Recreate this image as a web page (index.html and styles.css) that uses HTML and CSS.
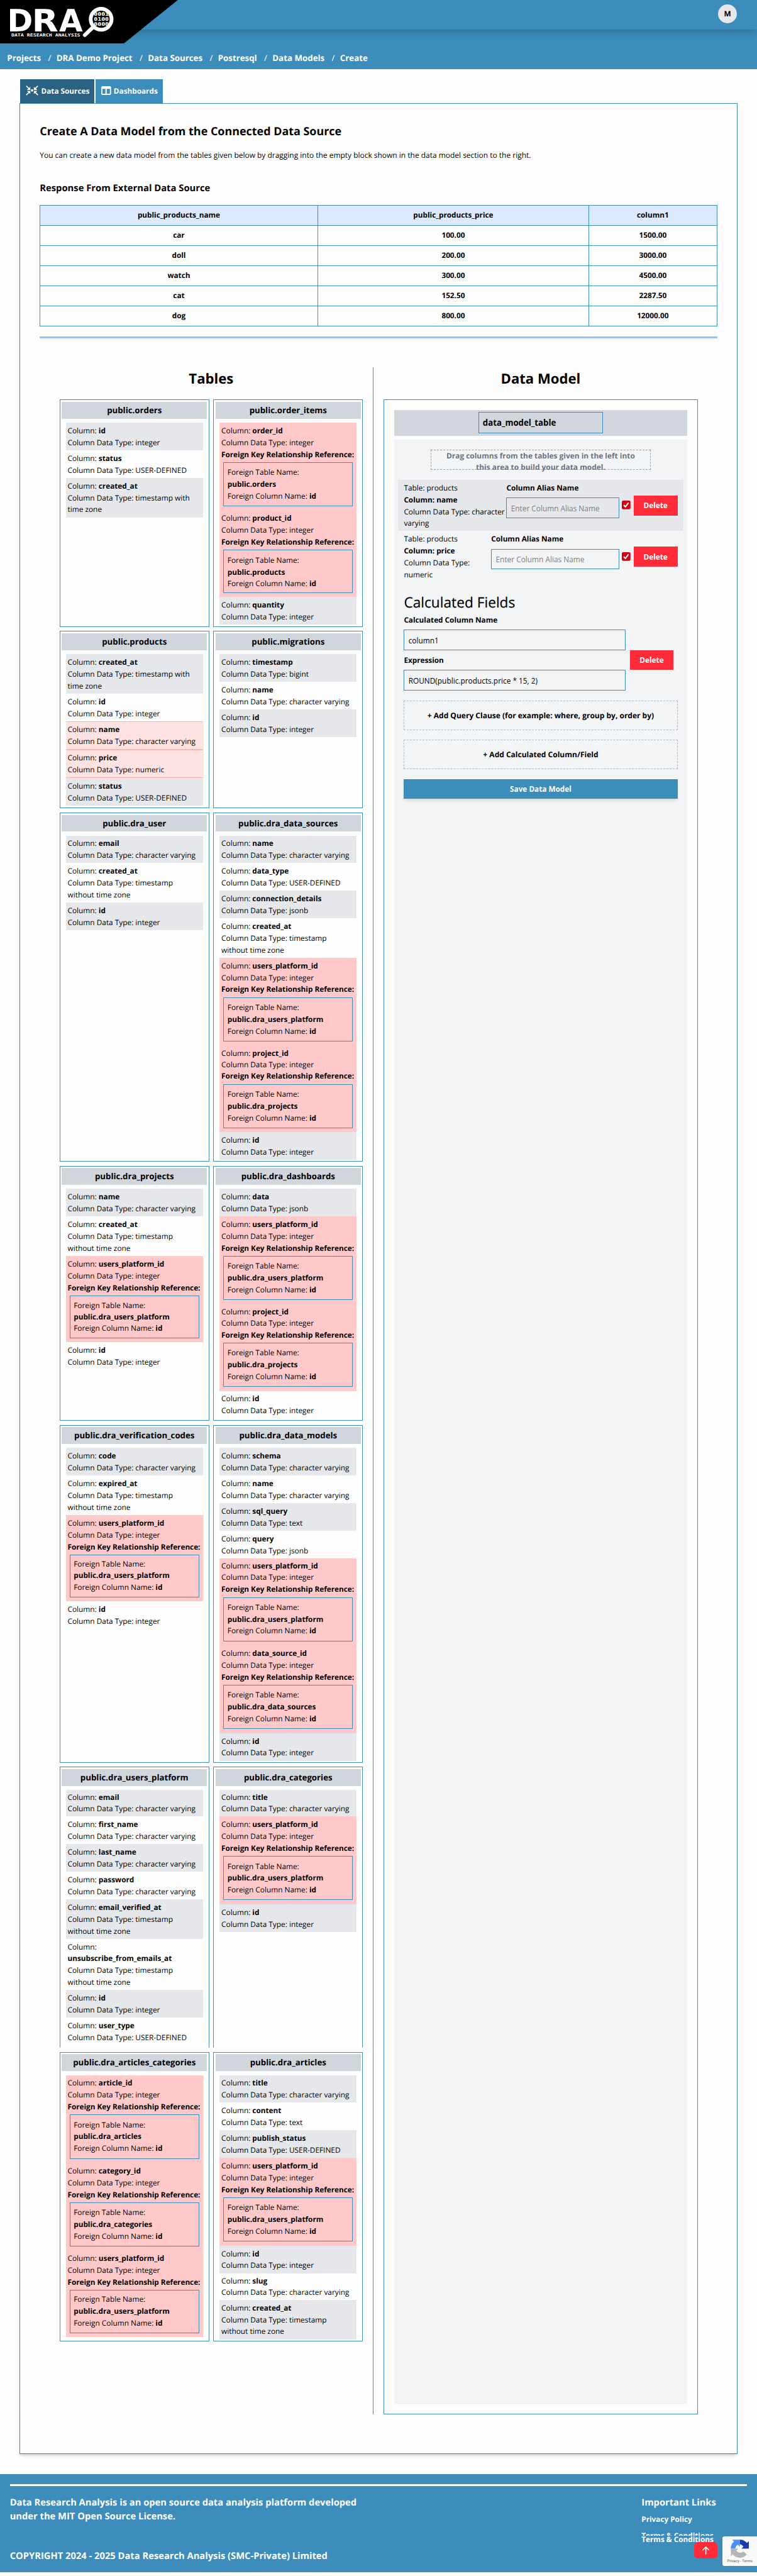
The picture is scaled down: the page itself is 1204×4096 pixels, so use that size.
FILE: index.html
```html
<!DOCTYPE html>
<html lang="en">
<head>
<meta charset="utf-8">
<title>Data Research Analysis - Create Data Model</title>
<link rel="stylesheet" href="styles.css">
</head>
<body>
<header class="site-header">
  <div class="topbar"><span class="avatar">M</span></div>
  <nav class="crumbs">
    <a>Projects</a><i>/</i><a>DRA Demo Project</a><i>/</i><a>Data Sources</a><i>/</i><a>Postresql</a><i>/</i><a>Data Models</a><i>/</i><a>Create</a>
  </nav>
  <svg class="logo" viewBox="0 0 451 110">
    <path d="M0 0H451L314.500 110H0Z" fill="#000"/>
    <g fill="#fff" class="logo-word">
      <text x="18.500" y="80" textLength="65" lengthAdjust="spacingAndGlyphs">D</text>
      <text x="81" y="80" textLength="67" lengthAdjust="spacingAndGlyphs">R</text>
      <text x="150" y="80" textLength="60" lengthAdjust="spacingAndGlyphs">A</text>
    </g>
    <text class="logo-tag" x="28.500" y="92" textLength="175" lengthAdjust="spacingAndGlyphs" fill="#fff">DATA RESEARCH ANALYSIS</text>
    <path d="M238 67L215 89" stroke="#fff" stroke-width="9.500" stroke-linecap="round"/>
    <circle cx="256.500" cy="48.700" r="26.500" fill="#000" stroke="#fff" stroke-width="9.500"/>
    <g class="logo-bits" fill="#fff">
      <text x="238" y="40.300" textLength="38" lengthAdjust="spacingAndGlyphs">0001</text>
      <text x="238" y="52.500" textLength="38" lengthAdjust="spacingAndGlyphs">0100</text>
      <text x="238" y="64.700" textLength="38" lengthAdjust="spacingAndGlyphs">0000</text>
    </g>
  </svg>
</header>

<main>
  <div class="tabs">
    <a class="tab active"><svg class="ico-src" viewBox="196 650 98 77"><g fill="none" stroke="#fff" stroke-width="8" stroke-linecap="round"><path d="M202 655L222 675M288 655L268 675M202 722L222 702M288 722L268 702"/></g><path fill="#fff" d="M231 660V684H205L214 675L222 669ZM259 660V684H285L276 675L268 669ZM231 716V692H205L214 701L222 707ZM259 716V692H285L276 701L268 707Z"/><circle cx="245" cy="688" r="9.500" fill="#fff"/></svg>Data Sources</a>
    <a class="tab"><svg class="ico-dash" viewBox="771 655 75 67"><path fill="#fff" fill-rule="evenodd" d="M781 655H836Q846 655 846 665V712Q846 722 836 722H781Q771 722 771 712V665Q771 655 781 655ZM780 675V712H803V675ZM813 675V712H837V675Z"/></svg>Dashboards</a>
  </div>
  <section class="panel">
    <h1>Create A Data Model from the Connected Data Source</h1>
    <p class="lead">You can create a new data model from the tables given below by dragging into the empty block shown in the data model section to the right.</p>
    <h2>Response From External Data Source</h2>
    <table class="response">
      <colgroup><col class="c1"><col class="c2"><col class="c3"></colgroup>
      <tr class="head"><th>public_products_name</th><th>public_products_price</th><th>column1</th></tr>
      <tr><td>car</td><td>100.00</td><td>1500.00</td></tr>
      <tr><td>doll</td><td>200.00</td><td>3000.00</td></tr>
      <tr><td>watch</td><td>300.00</td><td>4500.00</td></tr>
      <tr><td>cat</td><td>152.50</td><td>2287.50</td></tr>
      <tr><td>dog</td><td>800.00</td><td>12000.00</td></tr>
    </table>
    <div class="rule"></div>

    <div class="workspace">
      <section class="left">
        <h3>Tables</h3>
        <div class="cards">
          <article class="card">
            <h4>public.orders</h4>
            <ul>
              <li class="alt"><p>Column: <b>id</b></p><p>Column Data Type: integer</p></li>
              <li><p>Column: <b>status</b></p><p>Column Data Type: USER-DEFINED</p></li>
              <li class="alt"><p>Column: <b>created_at</b></p><p>Column Data Type: timestamp with time zone</p></li>
            </ul>
          </article>
          <article class="card">
            <h4>public.order_items</h4>
            <ul>
              <li class="fk"><p>Column: <b>order_id</b></p><p>Column Data Type: integer</p><p><b>Foreign Key Relationship Reference:</b></p>
                <div class="ref"><p>Foreign Table Name:</p><p><b>public.orders</b></p><p>Foreign Column Name: <b>id</b></p></div></li>
              <li class="fk"><p>Column: <b>product_id</b></p><p>Column Data Type: integer</p><p><b>Foreign Key Relationship Reference:</b></p>
                <div class="ref tight"><p>Foreign Table Name:</p><p><b>public.products</b></p><p>Foreign Column Name: <b>id</b></p></div></li>
              <li class="alt"><p>Column: <b>quantity</b></p><p>Column Data Type: integer</p></li>
            </ul>
          </article>

          <article class="card">
            <h4>public.products</h4>
            <ul>
              <li class="alt"><p>Column: <b>created_at</b></p><p>Column Data Type: timestamp with time zone</p></li>
              <li><p>Column: <b>id</b></p><p>Column Data Type: integer</p></li>
              <li class="used"><p>Column: <b>name</b></p><p>Column Data Type: character varying</p></li>
              <li class="used"><p>Column: <b>price</b></p><p>Column Data Type: numeric</p></li>
              <li class="alt"><p>Column: <b>status</b></p><p>Column Data Type: USER-DEFINED</p></li>
            </ul>
          </article>
          <article class="card">
            <h4>public.migrations</h4>
            <ul>
              <li class="alt"><p>Column: <b>timestamp</b></p><p>Column Data Type: bigint</p></li>
              <li><p>Column: <b>name</b></p><p>Column Data Type: character varying</p></li>
              <li class="alt"><p>Column: <b>id</b></p><p>Column Data Type: integer</p></li>
            </ul>
          </article>

          <article class="card">
            <h4>public.dra_user</h4>
            <ul>
              <li class="alt"><p>Column: <b>email</b></p><p>Column Data Type: character varying</p></li>
              <li><p>Column: <b>created_at</b></p><p>Column Data Type: timestamp without time zone</p></li>
              <li class="alt"><p>Column: <b>id</b></p><p>Column Data Type: integer</p></li>
            </ul>
          </article>
          <article class="card">
            <h4>public.dra_data_sources</h4>
            <ul>
              <li class="alt"><p>Column: <b>name</b></p><p>Column Data Type: character varying</p></li>
              <li><p>Column: <b>data_type</b></p><p>Column Data Type: USER-DEFINED</p></li>
              <li class="alt"><p>Column: <b>connection_details</b></p><p>Column Data Type: jsonb</p></li>
              <li><p>Column: <b>created_at</b></p><p>Column Data Type: timestamp without time zone</p></li>
              <li class="fk"><p>Column: <b>users_platform_id</b></p><p>Column Data Type: integer</p><p><b>Foreign Key Relationship Reference:</b></p>
                <div class="ref"><p>Foreign Table Name:</p><p><b>public.dra_users_platform</b></p><p>Foreign Column Name: <b>id</b></p></div></li>
              <li class="fk"><p>Column: <b>project_id</b></p><p class="tight">Column Data Type: integer</p><p><b>Foreign Key Relationship Reference:</b></p>
                <div class="ref"><p>Foreign Table Name:</p><p><b>public.dra_projects</b></p><p>Foreign Column Name: <b>id</b></p></div></li>
              <li class="alt"><p>Column: <b>id</b></p><p>Column Data Type: integer</p></li>
            </ul>
          </article>

          <article class="card">
            <h4>public.dra_projects</h4>
            <ul>
              <li class="alt"><p>Column: <b>name</b></p><p>Column Data Type: character varying</p></li>
              <li><p>Column: <b>created_at</b></p><p>Column Data Type: timestamp without time zone</p></li>
              <li class="fk"><p>Column: <b>users_platform_id</b></p><p>Column Data Type: integer</p><p><b>Foreign Key Relationship Reference:</b></p>
                <div class="ref tight"><p>Foreign Table Name:</p><p class="tight"><b>public.dra_users_platform</b></p><p>Foreign Column Name: <b>id</b></p></div></li>
              <li><p>Column: <b>id</b></p><p>Column Data Type: integer</p></li>
            </ul>
          </article>
          <article class="card">
            <h4>public.dra_dashboards</h4>
            <ul>
              <li class="alt"><p>Column: <b>data</b></p><p>Column Data Type: jsonb</p></li>
              <li class="fk"><p>Column: <b>users_platform_id</b></p><p>Column Data Type: integer</p><p><b>Foreign Key Relationship Reference:</b></p>
                <div class="ref"><p>Foreign Table Name:</p><p><b>public.dra_users_platform</b></p><p>Foreign Column Name: <b>id</b></p></div></li>
              <li class="fk"><p class="tight">Column: <b>project_id</b></p><p>Column Data Type: integer</p><p><b>Foreign Key Relationship Reference:</b></p>
                <div class="ref"><p>Foreign Table Name:</p><p><b>public.dra_projects</b></p><p>Foreign Column Name: <b>id</b></p></div></li>
              <li><p>Column: <b>id</b></p><p>Column Data Type: integer</p></li>
            </ul>
          </article>

          <article class="card">
            <h4>public.dra_verification_codes</h4>
            <ul>
              <li class="alt"><p>Column: <b>code</b></p><p>Column Data Type: character varying</p></li>
              <li><p>Column: <b>expired_at</b></p><p>Column Data Type: timestamp without time zone</p></li>
              <li class="fk"><p>Column: <b>users_platform_id</b></p><p>Column Data Type: integer</p><p><b>Foreign Key Relationship Reference:</b></p>
                <div class="ref tight raised"><p>Foreign Table Name:</p><p><b>public.dra_users_platform</b></p><p>Foreign Column Name: <b>id</b></p></div></li>
              <li><p>Column: <b>id</b></p><p>Column Data Type: integer</p></li>
            </ul>
          </article>
          <article class="card">
            <h4>public.dra_data_models</h4>
            <ul>
              <li class="alt"><p>Column: <b>schema</b></p><p>Column Data Type: character varying</p></li>
              <li><p>Column: <b>name</b></p><p>Column Data Type: character varying</p></li>
              <li class="alt"><p>Column: <b>sql_query</b></p><p>Column Data Type: text</p></li>
              <li><p>Column: <b>query</b></p><p>Column Data Type: jsonb</p></li>
              <li class="fk raised"><p>Column: <b>users_platform_id</b></p><p>Column Data Type: integer</p><p><b>Foreign Key Relationship Reference:</b></p>
                <div class="ref"><p>Foreign Table Name:</p><p><b>public.dra_users_platform</b></p><p>Foreign Column Name: <b>id</b></p></div></li>
              <li class="fk"><p>Column: <b>data_source_id</b></p><p>Column Data Type: integer</p><p><b>Foreign Key Relationship Reference:</b></p>
                <div class="ref"><p>Foreign Table Name:</p><p><b>public.dra_data_sources</b></p><p>Foreign Column Name: <b>id</b></p></div></li>
              <li class="alt"><p>Column: <b>id</b></p><p>Column Data Type: integer</p></li>
            </ul>
          </article>

          <article class="card open">
            <h4>public.dra_users_platform</h4>
            <ul>
              <li class="alt"><p class="tight">Column: <b>email</b></p><p>Column Data Type: character varying</p></li>
              <li><p>Column: <b>first_name</b></p><p>Column Data Type: character varying</p></li>
              <li class="alt"><p>Column: <b>last_name</b></p><p>Column Data Type: character varying</p></li>
              <li><p>Column: <b>password</b></p><p>Column Data Type: character varying</p></li>
              <li class="alt"><p>Column: <b>email_verified_at</b></p><p>Column Data Type: timestamp without time zone</p></li>
              <li><p>Column:<br><b>unsubscribe_from_emails_at</b></p><p>Column Data Type: timestamp without time zone</p></li>
              <li class="alt"><p>Column: <b>id</b></p><p>Column Data Type: integer</p></li>
              <li><p>Column: <b>user_type</b></p><p>Column Data Type: USER-DEFINED</p></li>
            </ul>
          </article>
          <article class="card open">
            <h4>public.dra_categories</h4>
            <ul>
              <li class="alt"><p class="tight">Column: <b>title</b></p><p>Column Data Type: character varying</p></li>
              <li class="fk"><p>Column: <b>users_platform_id</b></p><p>Column Data Type: integer</p><p><b>Foreign Key Relationship Reference:</b></p>
                <div class="ref"><p>Foreign Table Name:</p><p><b>public.dra_users_platform</b></p><p>Foreign Column Name: <b>id</b></p></div></li>
              <li class="alt"><p>Column: <b>id</b></p><p>Column Data Type: integer</p></li>
            </ul>
          </article>

          <article class="card">
            <h4>public.dra_articles_categories</h4>
            <ul>
              <li class="fk"><p>Column: <b>article_id</b></p><p>Column Data Type: integer</p><p><b>Foreign Key Relationship Reference:</b></p>
                <div class="ref"><p>Foreign Table Name:</p><p><b>public.dra_articles</b></p><p>Foreign Column Name: <b>id</b></p></div></li>
              <li class="fk"><p>Column: <b>category_id</b></p><p>Column Data Type: integer</p><p><b>Foreign Key Relationship Reference:</b></p>
                <div class="ref"><p>Foreign Table Name:</p><p><b>public.dra_categories</b></p><p>Foreign Column Name: <b>id</b></p></div></li>
              <li class="fk"><p>Column: <b>users_platform_id</b></p><p>Column Data Type: integer</p><p><b>Foreign Key Relationship Reference:</b></p>
                <div class="ref tight raised"><p>Foreign Table Name:</p><p><b>public.dra_users_platform</b></p><p>Foreign Column Name: <b>id</b></p></div></li>
            </ul>
          </article>
          <article class="card">
            <h4>public.dra_articles</h4>
            <ul>
              <li class="alt"><p>Column: <b>title</b></p><p>Column Data Type: character varying</p></li>
              <li><p>Column: <b>content</b></p><p>Column Data Type: text</p></li>
              <li class="alt"><p>Column: <b>publish_status</b></p><p>Column Data Type: USER-DEFINED</p></li>
              <li class="fk"><p>Column: <b>users_platform_id</b></p><p>Column Data Type: integer</p><p><b>Foreign Key Relationship Reference:</b></p>
                <div class="ref"><p>Foreign Table Name:</p><p><b>public.dra_users_platform</b></p><p>Foreign Column Name: <b>id</b></p></div></li>
              <li class="alt"><p>Column: <b>id</b></p><p>Column Data Type: integer</p></li>
              <li><p>Column: <b>slug</b></p><p class="tight">Column Data Type: character varying</p></li>
              <li class="alt"><p>Column: <b>created_at</b></p><p>Column Data Type: timestamp without time zone</p></li>
            </ul>
          </article>
        </div>
      </section>

      <section class="right">
        <h3>Data Model</h3>
        <div class="model">
          <div class="model-head"><input class="model-name" value="data_model_table"></div>
          <div class="model-body">
            <p class="hint">Drag columns from the tables given in the left into<br>this area to build your data model.</p>
            <div class="field shaded">
              <div class="info w1"><p>Table: products</p><p><b>Column: name</b></p><p>Column Data Type: character varying</p></div>
              <label><b>Column Alias Name</b><input placeholder="Enter Column Alias Name"></label>
              <svg class="check" viewBox="0 0 22 22"><rect width="22" height="22" rx="3.500" fill="#d30014"/><path d="M5 11.500L9 16L17 5.500" fill="none" stroke="#fff" stroke-width="3.200"/></svg>
              <button class="delete">Delete</button>
            </div>
            <div class="field">
              <div class="info w2"><p>Table: products</p><p><b>Column: price</b></p><p>Column Data Type: numeric</p></div>
              <label><b>Column Alias Name</b><input placeholder="Enter Column Alias Name"></label>
              <svg class="check" viewBox="0 0 22 22"><rect width="22" height="22" rx="3.500" fill="#d30014"/><path d="M5 11.500L9 16L17 5.500" fill="none" stroke="#fff" stroke-width="3.200"/></svg>
              <button class="delete">Delete</button>
            </div>
            <h5>Calculated Fields</h5>
            <div class="calc">
              <div class="calc-inputs">
                <label><b>Calculated Column Name</b><input value="column1"></label>
                <label><b>Expression</b><input value="ROUND(public.products.price * 15, 2)"></label>
              </div>
              <button class="delete">Delete</button>
            </div>
            <div class="add">+ Add Query Clause (for example: where, group by, order by)</div>
            <div class="add">+ Add Calculated Column/Field</div>
            <button class="save">Save Data Model</button>
          </div>
        </div>
      </section>
    </div>
  </section>
</main>

<footer class="site-footer">
  <div class="foot-rule"></div>
  <div class="foot-cols">
    <div class="about">
      <p>Data Research Analysis is an open source data analysis platform developed<br>under the MIT Open Source License.</p>
      <p class="copy">COPYRIGHT 2024 - 2025 Data Research Analysis (SMC-Private) Limited</p>
    </div>
    <div class="links">
      <h6>Important Links</h6>
      <a>Privacy Policy</a>
      <a class="clipped">Terms &amp; Conditions</a>
      <a class="terms">Terms &amp; Conditions</a>
    </div>
  </div>
  <span class="to-top"><svg viewBox="0 0 18 20"><path d="M9 19V2M1.500 9L9 1.500L16.500 9" fill="none" stroke="#fff" stroke-width="2.600" stroke-linecap="round"/></svg></span>
  <div class="recaptcha">
    <svg viewBox="0 0 140 142"><path fill="#4a90f5" d="M0 70A70 70 0 0 1 25 16L12 1H70V56L54 40A35 35 0 0 0 36 70Z"/><path fill="#1c3aa9" d="M70 1A70 70 0 0 1 124 27L139 13V70H83L97 55A35 35 0 0 0 70 36Z"/><path fill="#b5b5b5" d="M1 70H57L43 85A35 35 0 0 0 97 91L123 115A70 70 0 0 1 15 113L1 129Z"/></svg>
    <span>Privacy - Terms</span>
  </div>
</footer>
</body>
</html>
```
FILE: styles.css
```css
html { font-size: 6.27083px; }
* { box-sizing: border-box; margin: 0; padding: 0; }
body {
  width: 192rem;
  height: 4096px;
  overflow: hidden;
  background: #fefefe;
  color: #000;
  font-family: "Open Sans", "Noto Sans", sans-serif;
  font-size: 1.893rem;
  line-height: 3rem;
  text-rendering: geometricPrecision;
}
ul { list-style: none; }
b { font-weight: 700; font-size: 0.993em; }
h1, h2, h3, h4, h6 { font-weight: 700; }
input, button { font: inherit; color: inherit; background: none; border: 0; border-radius: 0; display: block; }

/* header */
.site-header { position: relative; height: 17.5rem; background: #3c8dbc; color: #fff; }
.topbar {
  height: 7.5rem;
  padding: 1.1rem 5.1rem 0 0;
  display: flex;
  justify-content: flex-end;
  box-shadow: 0 1.2rem 1.9rem -0.4rem rgba(0,0,0,.16), 0 0.5rem 0.8rem -0.5rem rgba(0,0,0,.14);
}
.avatar {
  width: 4.8rem; height: 4.8rem; border-radius: 50%;
  background: #e5e7eb; color: #000;
  font-weight: 700; line-height: 4.8rem; text-align: center;
}
.crumbs {
  display: flex;
  padding: 5.5rem 0 0 1.8rem;
  font-size: 2.125rem; line-height: 3.5rem; font-weight: 700;
}
.crumbs i { font-style: normal; font-weight: 400; margin: 0 1.32rem 0 1.82rem; }
.logo { position: absolute; left: 0; top: 0; width: 45.1rem; height: 11rem; }
.logo-word { font: bold 78px "DejaVu Sans", sans-serif; }
.logo-tag { font: bold 10.5px "DejaVu Sans Mono", monospace; }
.logo-bits { font: bold 12.5px "DejaVu Sans Mono", monospace; }

/* tabs */
.tabs { display: flex; gap: 0.2rem; padding: 2.6rem 0 0 5.1rem; height: 8.7rem; }
.tab {
  height: 6rem; padding: 0.2rem 0 0 1.5rem; width: 17.1rem;
  display: flex; align-items: center; gap: 0.65rem;
  background: #3c8dbc; color: #fff; font-weight: 700; font-size: 1.88rem;
}
.tab svg { margin-top: -0.5rem; }
.tab.active { background: #2a6283; width: 18.9rem; }
.ico-src { width: 3.2rem; height: 2.5rem; }
.ico-dash { width: 2.5rem; height: 2.23rem; }

/* main panel */
.panel {
  margin: 0 5rem;
  height: 596.1rem;
  padding: 5.1rem 4.93rem 0;
  border: 1px solid #3c8dbc;
  box-shadow: 0 0.5rem 0.8rem -0.1rem rgba(0,0,0,.12), 0 0.3rem 0.5rem -0.2rem rgba(0,0,0,.12);
}
h1 { font-size: 2.86rem; line-height: 4rem; }
.lead { margin-top: 2.5rem; white-space: nowrap; font-size: 1.912rem; }
h2 { margin-top: 5.15rem; font-size: 2.36rem; line-height: 3.5rem; }
.response {
  width: 171.8rem; margin-top: 2.45rem;
  border-collapse: collapse; table-layout: fixed;
  text-align: center; font-weight: 700; font-size: 1.88rem;
}
.response .c1 { width: 70.4rem; }
.response .c2 { width: 68.8rem; }
.response tr { height: 5.1rem; }
.response th, .response td { border: 1px solid #3c8dbc; height: 5.1rem; }
.response .head { background: #dbeafe; }
.rule { height: 0.5rem; width: 171.8rem; margin-top: 2.55rem; background: #8ec5ff; }

.workspace { display: flex; margin-top: 7.35rem; height: 519rem; width: 171.8rem; }
.left { width: 84.7rem; border-right: 1px solid #3c8dbc; padding: 0.4rem 2.6rem 0 5rem; }
h3 { font-size: 3.53rem; line-height: 5rem; text-align: center; }
.cards {
  margin-top: 2.7rem;
  display: grid; grid-template-columns: 38rem 38rem; column-gap: 1rem; row-gap: 1rem;
  grid-template-rows: 57.7rem 45rem 88.6rem 64.7rem 85.7rem 71.3rem 73.5rem;
}
.card { border: 1px solid #3c8dbc; padding: 0.45rem 0.45rem 0; }
.card.open { border-bottom-color: transparent; }
h4 {
  height: 4.25rem; background: #d1d5dc;
  font-size: 2.115rem; line-height: 4.45rem; text-align: center;
}
.card ul { padding: 1.03rem 1rem 0; }
.card li { padding: 0.62rem 0.45rem 0.38rem; }
.card li p { line-height: 3rem; }
.card li p b { white-space: nowrap; }
.alt { background: #e5e7eb; }
.used { background: #ffe2e2; border: solid #ffb3b3; border-width: 1px 0; height: 7.2rem; }
.card .used { padding-top: 0.5rem; }
.fk { background: #ffc9c9; }
.card li.fk { padding-bottom: 0.5rem; height: 22.25rem; }
.card li.raised { padding-top: 0.42rem; height: 22.05rem; }
.ref {
  margin: 0.4rem 0.5rem 0.5rem;
  height: 11.2rem; padding: 1rem 0.9rem 0;
  border: 1px solid #3c8dbc;
}
.ref.tight { height: 10.9rem; }
.ref.raised { padding-top: 0.75rem; }
.card li p.tight { line-height: 2.75rem; }
.card li:has(.tight) { height: auto; }

/* data model */
.right { padding: 0.4rem 0 0 2.55rem; }
.model { width: 79.6rem; margin-top: 2.7rem; height: 510.9rem; padding: 2.5rem 2.45rem 0; border: 1px solid #3c8dbc; }
.model-head { height: 6.5rem; margin: 0; background: #d1d5dc; padding-top: 0.45rem; }
.model input { border: 1px solid #3c8dbc; padding: 0 1rem; }
.model input.model-name {
  width: 31.7rem; height: 5.55rem; margin: 0 auto;
  font-weight: 700; font-size: 2.115rem;
}
.model-body { margin-top: 1rem; height: 498.2rem; background: #f3f4f6; padding: 2.5rem 1rem 0; }
.hint {
  width: 55.8rem; height: 5.2rem; margin: 0 auto 2.5rem;
  border: 1px dashed #99a1af; color: #6a7282; white-space: nowrap;
  font-weight: 700; font-size: 1.9rem; text-align: center; line-height: 3rem;
}
.field { display: flex; align-items: flex-start; height: 13rem; padding: 0.65rem 1.5rem 0; }
.shaded { background: #e5e7eb; }
.info { flex: none; }
.w1 { width: 26rem; }
.w2 { width: 22.15rem; }
.w2 p:last-child { width: 19rem; }
.field label { flex: 1; }
.model label b { display: block; font-size: 1.88rem; line-height: 3rem; }
.model label input { width: 100%; height: 5.2rem; margin-top: 0.9rem; }
.model input::placeholder { color: #808080; opacity: 1; }
.check { width: 2.2rem; height: 2.2rem; margin: 4.7rem 0.8rem 0 0.6rem; flex: none; }
.delete {
  width: 11.1rem; height: 5.05rem; flex: none; margin-top: 3.35rem;
  background: #ff2b38; color: #fff; font-weight: 700; font-size: 1.88rem; text-align: center;
}
h5 { margin: 2.6rem 0 0.55rem 1.5rem; font-size: 3.62rem; line-height: 5rem; font-weight: 400; -webkit-text-stroke: 0.2px #000; }
.calc { display: flex; align-items: center; gap: 1rem; padding-left: 1.5rem; }
.calc-inputs { width: 56.3rem; }
.calc-inputs label { display: block; margin-bottom: 1.1rem; }
.calc .delete { margin-top: 2.7rem; }
.add {
  margin: 2.5rem 1.5rem 0; height: 7.5rem; line-height: 7.3rem;
  border: 1px dashed #b4bac4; text-align: center; font-weight: 700; font-size: 1.92rem;
}
.calc + .add { margin-top: 1.4rem; }
.save {
  margin: 2.5rem 1.5rem 0; width: 69.4rem; height: 5rem;
  background: #3c8dbc; color: #fff; font-weight: 700; font-size: 1.88rem;
  box-shadow: 0 0.5rem 0.8rem -0.1rem rgba(0,0,0,.12);
}

/* footer */
.site-footer {
  position: relative; margin-top: 5rem; height: 25rem; padding: 2.55rem 2.5rem 0;
  background: #3c8dbc; color: #fff; font-weight: 700;
}
.foot-rule { height: 0.5rem; background: #fff; }
.foot-cols { display: flex; justify-content: space-between; padding-top: 2.6rem; }
.about, h6 { font-size: 2.35rem; line-height: 3.5rem; }
.copy { margin-top: 6.5rem; }
.links { width: 26.8rem; font-size: 1.88rem; }
.links a { display: block; line-height: 3rem; margin-top: 1rem; }
.links .clipped { height: 1.4rem; overflow: hidden; margin-top: 1.1rem; }
.links .terms { margin-top: -0.4rem; }
.to-top {
  position: absolute; right: 10rem; top: 17.3rem; width: 6rem; height: 4.2rem;
  border-radius: 0.9rem; background: #ff2b38; display: flex; align-items: center; justify-content: center;
}
.to-top svg { width: 1.8rem; height: 2rem; }
.recaptcha {
  position: absolute; right: 0; top: 15.8rem; width: 8.7rem; height: 7.5rem;
  border-radius: 0.5rem 0 0 0.5rem; background: #f9f9f9; box-shadow: 0 0 0.6rem #777;
  display: flex; flex-direction: column; align-items: center; padding-top: 0.8rem;
}
.recaptcha svg { width: 4.7rem; height: 4.7rem; }
.recaptcha span { font: 400 0.95rem/1.8rem Roboto, sans-serif; color: #555; white-space: nowrap; }
```
